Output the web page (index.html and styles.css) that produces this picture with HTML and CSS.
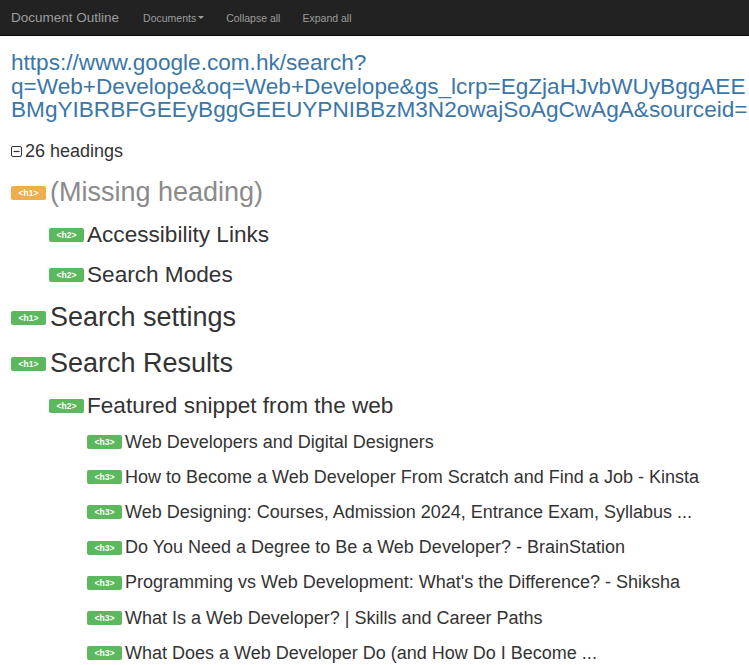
FILE: index.html
```html
<!DOCTYPE html>
<html>
<head>
<meta charset="utf-8">
<link rel="stylesheet" href="styles.css">
</head>
<body>
<nav class="navbar">
  <span class="brand">Document Outline</span>
  <span class="nav-item">Documents<span class="caret"></span></span>
  <span class="nav-item">Collapse all</span>
  <span class="nav-item">Expand all</span>
</nav>
<main class="content">
  <a class="url">https://www.google.com.hk/search?<br>q=Web+Develope&amp;oq=Web+Develope&amp;gs_lcrp=EgZjaHJvbWUyBggAEE<br>BMgYIBRBFGEEyBggGEEUYPNIBBzM3N2owajSoAgCwAgA&amp;sourceid=</a>
  <div class="count">
    <svg class="toggle" width="11" height="11" viewBox="0 0 11 11"><rect x="0.5" y="0.5" width="10" height="10" rx="1.5" fill="none" stroke="#333" stroke-width="1"/><line x1="2.5" y1="5.5" x2="8.5" y2="5.5" stroke="#333" stroke-width="1.2"/></svg>
    <span>26 headings</span>
  </div>
  <ul class="outline">
    <li class="row h1 missing"><span class="badge warn">&lt;h1&gt;</span><span class="text">(Missing heading)</span></li>
    <li class="row h2 lvl2"><span class="badge">&lt;h2&gt;</span><span class="text">Accessibility Links</span></li>
    <li class="row h2 lvl2"><span class="badge">&lt;h2&gt;</span><span class="text">Search Modes</span></li>
    <li class="row h1"><span class="badge">&lt;h1&gt;</span><span class="text">Search settings</span></li>
    <li class="row h1"><span class="badge">&lt;h1&gt;</span><span class="text">Search Results</span></li>
    <li class="row h2 lvl2"><span class="badge">&lt;h2&gt;</span><span class="text">Featured snippet from the web</span></li>
    <li class="row h3 lvl3"><span class="badge">&lt;h3&gt;</span><span class="text">Web Developers and Digital Designers</span></li>
    <li class="row h3 lvl3"><span class="badge">&lt;h3&gt;</span><span class="text">How to Become a Web Developer From Scratch and Find a Job - Kinsta</span></li>
    <li class="row h3 lvl3"><span class="badge">&lt;h3&gt;</span><span class="text">Web Designing: Courses, Admission 2024, Entrance Exam, Syllabus ...</span></li>
    <li class="row h3 lvl3"><span class="badge">&lt;h3&gt;</span><span class="text">Do You Need a Degree to Be a Web Developer? - BrainStation</span></li>
    <li class="row h3 lvl3"><span class="badge">&lt;h3&gt;</span><span class="text">Programming vs Web Development: What's the Difference? - Shiksha</span></li>
    <li class="row h3 lvl3"><span class="badge">&lt;h3&gt;</span><span class="text">What Is a Web Developer? | Skills and Career Paths</span></li>
    <li class="row h3 lvl3"><span class="badge">&lt;h3&gt;</span><span class="text">What Does a Web Developer Do (and How Do I Become ...</span></li>
  </ul>
</main>
</body>
</html>
```
FILE: styles.css
```css
html, body {
  margin: 0;
  padding: 0;
  background: #fff;
  overflow: hidden;
}
body {
  font-family: "Liberation Sans", Arial, sans-serif;
  color: #333;
  width: 749px;
  height: 665px;
}
.navbar {
  height: 36px;
  background: #222;
  border-bottom: 1px solid #080808;
  display: flex;
  align-items: center;
  padding-left: 11px;
  box-sizing: border-box;
  color: #9d9d9d;
}
.brand {
  font-size: 13.5px;
  margin-right: 24px;
}
.nav-item {
  font-size: 10.5px;
  margin-right: 22px;
  display: flex;
  align-items: center;
}
.caret {
  display: inline-block;
  width: 0;
  height: 0;
  border-left: 3px solid transparent;
  border-right: 3px solid transparent;
  border-top: 3px solid #9d9d9d;
  margin-left: 2px;
}
.content {
  padding: 15px 0 0 11px;
  white-space: nowrap;
}
.url {
  display: block;
  color: #3b76a8;
  font-size: 22.6px;
  line-height: 23.5px;
  text-decoration: none;
}
.count {
  display: flex;
  align-items: center;
  margin-top: 20px;
  font-size: 18px;
  height: 20px;
}
.toggle {
  margin-right: 3px;
}
.outline {
  list-style: none;
  margin: 8px 0 0 0;
  padding: 0;
}
.row {
  display: flex;
  align-items: center;
}
.h1 { height: 46px; font-size: 27px; }
.h2 { height: 40px; font-size: 22.6px; }
.h3 { height: 35.2px; font-size: 18px; }
.h1 + .h2 { margin-top: -1px; }
.h2 + .h3 { margin-top: -1px; }
.lvl2 { padding-left: 38px; }
.lvl3 { padding-left: 76px; }
.missing .text { color: #8a8a8a; }
.badge {
  display: inline-flex;
  align-items: center;
  justify-content: center;
  width: 35px;
  height: 14px;
  background: #5cb85c;
  color: #fff;
  font-size: 8.5px;
  font-weight: bold;
  border-radius: 2px;
  margin-right: 3px;
  flex-shrink: 0;
}
.h1 .badge { margin-right: 4px; }
.badge.warn { background: #f0ad4e; }
```
